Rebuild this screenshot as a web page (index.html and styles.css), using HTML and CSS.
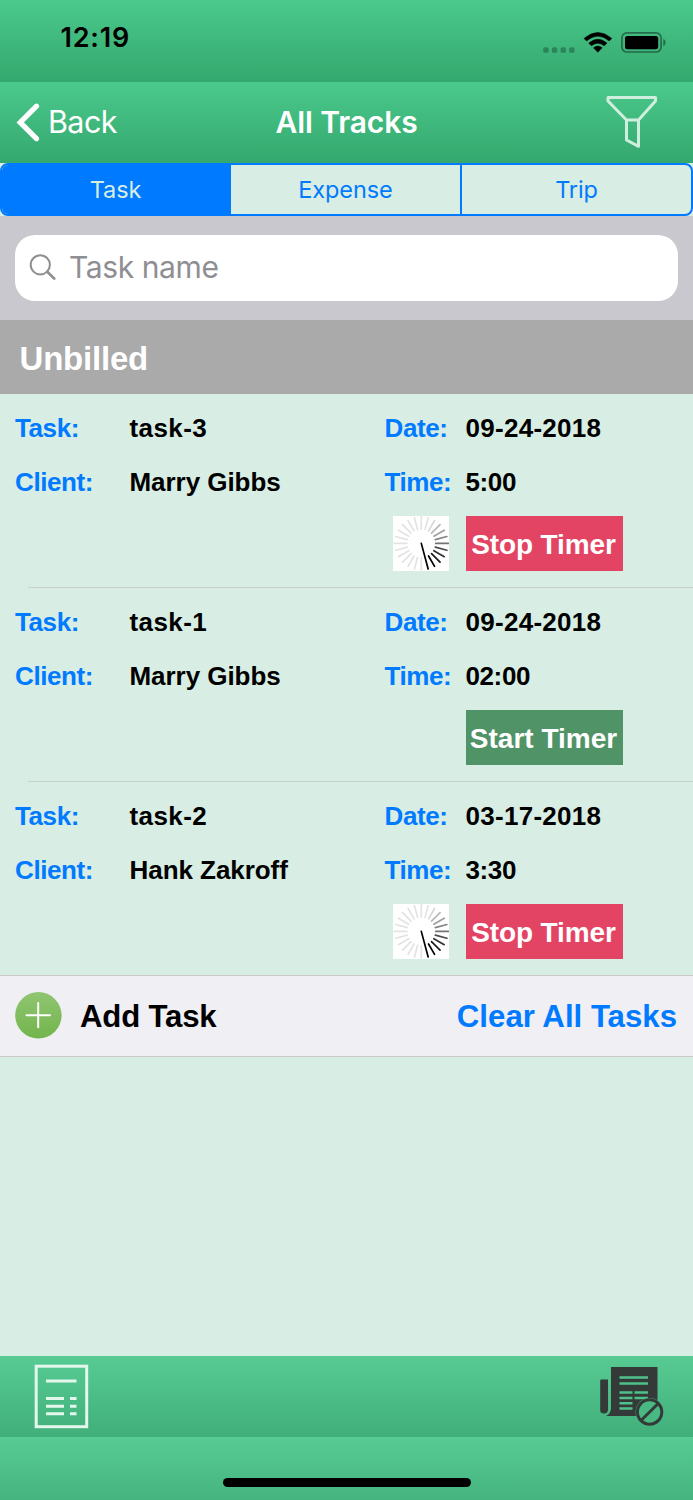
FILE: index.html
```
<!DOCTYPE html>
<html lang="en">
<head>
<meta charset="utf-8">
<title>All Tracks</title>
<link rel="stylesheet" href="styles.css">
</head>
<body>
<svg width="0" height="0" class="defs">
  <defs>
    <symbol id="spinner" viewBox="0 0 56 55">
      <rect width="56" height="55" fill="#fff"/>
      <g transform="translate(28.3 27.4)" stroke-width="1.7" stroke-linecap="round">
        <g stroke="#e3e3e3">
          <path d="M0-14.5V-27"/>
          <path d="M0-14.5V-26.5" transform="rotate(15)"/>
          <path d="M0-14.5V-26.5" transform="rotate(30)" stroke="#d8d8d8"/>
          <path d="M0-14.5V-26.5" transform="rotate(180)"/>
          <path d="M0-14.5V-26.5" transform="rotate(195)"/>
          <path d="M0-14.5V-26.5" transform="rotate(210)"/>
          <path d="M0-14.5V-26.5" transform="rotate(225)"/>
          <path d="M0-14.5V-26.5" transform="rotate(240)"/>
          <path d="M0-14.5V-26.5" transform="rotate(255)"/>
          <path d="M0-14.5V-27" transform="rotate(270)"/>
          <path d="M0-14.5V-26.5" transform="rotate(285)"/>
          <path d="M0-14.5V-26.5" transform="rotate(300)"/>
          <path d="M0-14.5V-26.5" transform="rotate(315)"/>
          <path d="M0-14.5V-26.5" transform="rotate(330)"/>
          <path d="M0-14.5V-26.5" transform="rotate(345)"/>
        </g>
        <path d="M0-14.5V-26.5" transform="rotate(45)" stroke="#b9b9b9"/>
        <path d="M0-14.5V-26.5" transform="rotate(60)" stroke="#a0a0a0"/>
        <path d="M0-14.5V-26.5" transform="rotate(75)" stroke="#858585"/>
        <path d="M0-14.5V-27" transform="rotate(90)" stroke="#737373"/>
        <path d="M0-14.5V-26.5" transform="rotate(105)" stroke="#4c4c4c"/>
        <path d="M0-14.5V-26.5" transform="rotate(120)" stroke="#303030"/>
        <path d="M0-14.5V-26.5" transform="rotate(135)" stroke="#181818"/>
        <path d="M0-14.5V-26.5" transform="rotate(150)" stroke="#000"/>
        <path d="M0 0V-26.5" transform="rotate(165)" stroke="#000"/>
      </g>
    </symbol>
  </defs>
</svg>
<div class="screen">
  <header class="status">
    <span class="clock">12:19</span>
    <svg class="status-icons" width="124" height="24" viewBox="0 0 124 24">
      <g fill="#000" fill-opacity=".27"><rect x="0.2" y="16.2" width="5.4" height="5.6" rx="1.6"/><rect x="8.9" y="16.2" width="5.4" height="5.6" rx="1.6"/><rect x="17.5" y="16.2" width="5.4" height="5.6" rx="1.6"/><rect x="26.1" y="16.2" width="5.4" height="5.6" rx="1.6"/></g>
      <path d="M41 7.4Q54.8-4.6 68.8 7.4L66.2 10Q54.8.4 43.6 10ZM45.7 12.1Q54.8 4.3 64 12.1L61.3 14.8Q54.8 9.6 48.4 14.8ZM50.5 16.8Q54.8 13.3 59.2 16.8L54.8 21.3Z" stroke="#000" stroke-width=".5" stroke-linejoin="round"/>
      <rect x="78.9" y="1.9" width="39.2" height="19.1" rx="5" fill="none" stroke="#000" stroke-opacity=".42" stroke-width="1.7"/>
      <rect x="82" y="4.9" width="33.2" height="13.4" rx="2.4"/>
      <path d="M120.3 7.7Q122.6 8.8 122.6 11.5T120.3 15.2Z" fill-opacity=".42"/>
    </svg>
  </header>
  <nav class="nav">
    <a class="back"><svg width="26" height="40" viewBox="0 0 26 40"><path d="M22.5 4.2 6.2 20.4 22.5 36.6" fill="none" stroke="#fff" stroke-width="5.2" stroke-linecap="round" stroke-linejoin="miter"/></svg><span>Back</span></a>
    <h1>All Tracks</h1>
    <svg class="filter" width="54" height="56" viewBox="0 0 54 56"><g fill="none" stroke="#cfeedd" stroke-width="3" stroke-linejoin="round"><path d="M4 3.5H51.5V7L34.5 26H22.5L4 7Z"/><path d="M22.5 26V46L34.5 52.3V26"/></g></svg>
  </nav>
  <div class="tabs"><span class="tab active">Task</span><span class="tab">Expense</span><span class="tab">Trip</span></div>
  <div class="searchbar"><div class="field">
    <svg width="30" height="30" viewBox="0 0 30 30"><g fill="none" stroke="#8e8e93" stroke-linecap="round"><circle cx="11.3" cy="11.8" r="9.6" stroke-width="2"/><path d="M18.3 18.8 25.3 25.6" stroke-width="2.7"/></g></svg>
    <span>Task name</span></div></div>
  <h2 class="section">Unbilled</h2>
  <main>
    <article class="task">
      <b class="k">Task:</b><b class="v name">task-3</b><b class="k">Date:</b><b class="v date">09-24-2018</b>
      <b class="k">Client:</b><b class="v">Marry Gibbs</b><b class="k">Time:</b><b class="v time">5:00</b>
      <svg class="spin" width="56" height="55"><use href="#spinner"/></svg><button class="btn stop">Stop Timer</button>
    </article>
    <article class="task">
      <b class="k">Task:</b><b class="v name">task-1</b><b class="k">Date:</b><b class="v date">09-24-2018</b>
      <b class="k">Client:</b><b class="v">Marry Gibbs</b><b class="k">Time:</b><b class="v time">02:00</b>
      <button class="btn start">Start Timer</button>
    </article>
    <article class="task">
      <b class="k">Task:</b><b class="v name">task-2</b><b class="k">Date:</b><b class="v date">03-17-2018</b>
      <b class="k">Client:</b><b class="v">Hank Zakroff</b><b class="k">Time:</b><b class="v time">3:30</b>
      <svg class="spin" width="56" height="55"><use href="#spinner"/></svg><button class="btn stop">Stop Timer</button>
    </article>
  </main>
  <div class="actions">
    <svg width="47" height="47" viewBox="0 0 47 47"><defs><linearGradient id="add" x2="0" y2="1"><stop stop-color="#90c571"/><stop offset="1" stop-color="#72b54c"/></linearGradient></defs><circle cx="23.4" cy="23.3" r="23.2" fill="url(#add)"/><path d="M11.5 23.3H35M23.2 11V35.2" stroke="#fff" stroke-width="2" stroke-linecap="round"/></svg>
    <span class="add">Add Task</span>
    <a class="clear">Clear All Tasks</a>
  </div>
  <footer>
    <div class="toolbar">
      <svg width="56" height="66" viewBox="0 0 56 66"><g fill="none" stroke="#e4f7ed" stroke-width="3"><rect x="3.2" y="2.2" width="50.5" height="60.5"/><path d="M13 17H43.5"/><path d="M13 34.5H31M13 42.2H31M13 49.8H31M37 34.5H43.5M37 42.2H43.5M37 49.8H43.5"/></g></svg>
      <svg width="66" height="64" viewBox="0 0 66 64"><path fill="#343a38" d="M12 2H58.5V51H7Q11.5 49 12 44ZM1.2 15.5Q1.2 14.5 2.2 14.5H9V44.5Q9 48.5 5 48.5T1.2 45Z"/><path d="M20.5 12.5H49M20.5 18.5H49M20.5 27.5H33.5M20.5 33H33.5M20.5 38.2H33.5M20.5 43.5H33.5M35.5 27.5H49M35.5 33H49" stroke="#4fc08a" stroke-width="2.6" fill="none"/><circle cx="50.6" cy="47" r="14" fill="#49b983"/><circle cx="50.6" cy="47" r="12.2" fill="none" stroke="#343a38" stroke-width="3"/><path d="M42 55.5 59.2 38.5" stroke="#343a38" stroke-width="3"/></svg>
    </div>
    <div class="home"><i></i></div>
  </footer>
</div>
</body>
</html>
```
FILE: styles.css
```
* { box-sizing: border-box; }
body { margin: 0; background: #d8ede3; font-family: "Liberation Sans", Arial, sans-serif; }
.defs { display: block; position: absolute; }
.screen { width: 693px; height: 1500px; display: flex; flex-direction: column; overflow: hidden; }
.screen > * { flex-shrink: 0; }
svg { display: block; flex-shrink: 0; }
.status, .nav { height: 81.5px; background: linear-gradient(#4bc98c, #34a86e); display: flex; justify-content: space-between; }
.status { padding: 21px 26px 0 60.5px; }
.clock { font: 600 27px/33px Inter, sans-serif; letter-spacing: .8px; }
.status-icons { margin-top: 10px; }
.nav { display: grid; grid-template-columns: 1fr auto 1fr; align-items: center; color: #fff; padding: 0 35px 0 14px; }
.back { display: flex; align-items: center; gap: 8px; font: 400 30.5px/40px Inter, sans-serif; letter-spacing: -.6px; }
.nav h1 { margin: 0 0 0 21px; font: 600 30px/40px Inter, sans-serif; letter-spacing: -.1px; white-space: nowrap; }
.filter { justify-self: end; }
.tabs { height: 53px; border: 2px solid #007aff; border-radius: 8px; display: grid; grid-template-columns: 229px 231px 1fr; overflow: hidden; font: 400 23.5px/49px Inter, sans-serif; letter-spacing: -.1px; color: #007aff; }
.tab { text-align: center; }
.tab:first-child { padding-right: 2px; }
.tab + .tab { border-right: 2px solid #007aff; }
.tab:last-child { border-right: 0; }
.tab.active { background: #007aff; color: #d8ede3; }
.searchbar { height: 103.5px; background: #c8c8ce; padding: 19px 15px; }
.field { height: 66px; border-radius: 20px; background: #fff; display: flex; align-items: center; gap: 10px; padding-left: 14px; color: #8e8e93; font: 400 30px/60px Inter, sans-serif; letter-spacing: -.4px; }
.field span { padding-bottom: 2px; }
.section { margin: 0; height: 74px; padding: 2px 0 0 19.5px; background: #aaa; color: #fff; font-size: 33px; line-height: 74px; letter-spacing: -.2px; }
main { height: 581.5px; }
.task { height: 194px; display: grid; grid-template-columns: 114.5px 255px 81px 1fr; grid-template-rows: 54px 54px 1fr; padding: 8.2px 0 0 15px; font-size: 26px; line-height: 53px; position: relative; white-space: nowrap; }
.task + .task::before { content: ""; position: absolute; left: 28px; right: 0; top: -1px; height: 1px; background: #c6d0cc; }
.k { color: #007aff; letter-spacing: -.4px; }
.v { letter-spacing: -.05px; }
.name { letter-spacing: .4px; }
.date { letter-spacing: .28px; }
.time { letter-spacing: -.4px; }
.spin { grid-column: 3; margin: 6px 0 0 8.5px; }
.btn { grid-column: 4; width: 157px; height: 55px; margin: 6px 0 0 0; border: 0; padding: 2px 1px 0 0; color: #fff; font: bold 28px/53px "Liberation Sans", Arial, sans-serif; letter-spacing: -.1px; white-space: nowrap; }
.stop { background: #e34463; }
.start { background: #509367; letter-spacing: 0; }
.actions { height: 82px; border: solid #c8c8cd; border-width: 1px 0; background: #efeff4; display: flex; align-items: center; padding: 0 16px 2px 15px; font-weight: bold; font-size: 31.2px; line-height: 80px; }
.add { margin-left: 18px; padding-top: 4px; letter-spacing: -.2px; }
.clear { margin-left: auto; padding-top: 4px; color: #007aff; }
footer { margin-top: auto; }
.toolbar { height: 81px; background: linear-gradient(#57cb93, #41af7a); display: flex; justify-content: space-between; align-items: center; padding: 0 28px 0 33px; }
.home { height: 63px; background: linear-gradient(#57cb93, #46b47f); display: flex; justify-content: center; align-items: flex-start; padding-top: 41px; }
.home i { width: 248px; height: 8.5px; border-radius: 5px; background: #000; }
```
